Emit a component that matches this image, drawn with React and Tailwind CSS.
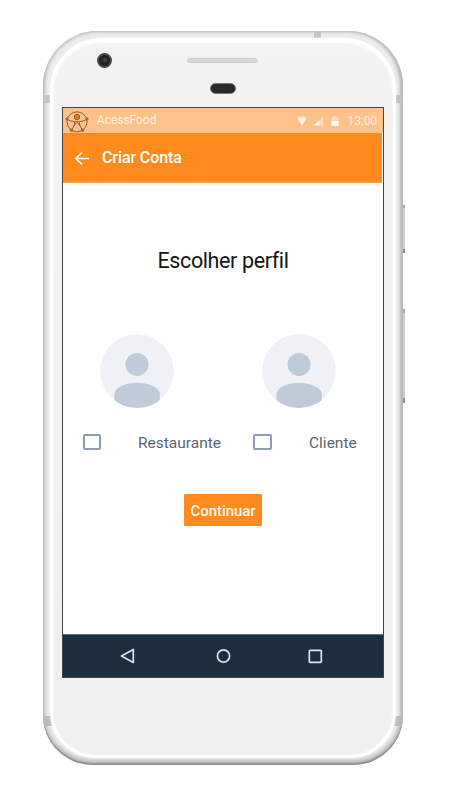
import React from 'react';

function Avatar() {
  return (
    <svg className="size-[74px]" viewBox="0 0 74 74">
      <defs>
        <clipPath id="avatarClip"><circle cx="37" cy="37" r="37" /></clipPath>
      </defs>
      <g clipPath="url(#avatarClip)">
        <circle cx="37" cy="37" r="37" fill="#eff1f7" />
        <circle cx="37" cy="30.4" r="11.5" fill="#bfcbd9" />
        <path d="M14.500 74V60c0-6 10-11.300 22.500-11.300S59.800 54 59.800 60v14z" fill="#bfcbd9" />
      </g>
    </svg>
  );
}

function Logo() {
  return (
    <svg className="mt-[2px] w-[24px] h-[23px]" viewBox="0 0 24 23" fill="none" stroke="#7d5333" strokeWidth=".9">
      <circle cx="12" cy="11.800" r="10" />
      <path d="M1.500 9Q4 11 9.500 11.700h5Q20 11 22.500 9M9.800 12 9.300 15 6.500 20.500M14.200 12 14.700 15 17.500 20.500M8.800 16 12 12.300 15.200 16" />
      <circle cx="12" cy="7" r="2.700" fill="#f57c0c" />
      <g fill="#b96522" stroke="#a75b20" strokeWidth=".5">
        <circle cx="1.900" cy="9" r="1.200" />
        <circle cx="22.100" cy="9" r="1.200" />
        <circle cx="6.500" cy="20.200" r="1.400" />
        <circle cx="17.500" cy="20.200" r="1.400" />
      </g>
    </svg>
  );
}

function StatusBar() {
  return (
    <div className="flex h-[25px] shrink-0 items-center bg-[#ffc28b] pl-[2px] pr-[6px] text-[12px] text-white/75">
      <Logo />
      <span className="ml-[8px] -mt-[2px] text-[12px] leading-[14px] tracking-[-0.05px]">AcessFood</span>
      <svg className="ml-auto w-[46px] h-[14px]" viewBox="0 0 46 14" fill="#fff">
        <path d="M.8 3.200Q6 .5 11.200 3.200L6 11.800z" fillOpacity=".4" />
        <path d="M1.800 4.500Q6 3 10.200 4.500L6 11.500z" fillOpacity=".75" />
        <path d="M18 11.500 27 2.500v9z" fillOpacity=".35" />
        <path d="M18 11.500 23.500 6.500v5z" fillOpacity=".85" />
        <path d="M35.500 3h2V2h3v1h2v9h-7z" fillOpacity=".4" />
        <path d="M35.500 7h7v5h-7z" fillOpacity=".9" />
      </svg>
      <span className="ml-[6px] text-[12px] leading-[14px] tracking-[-0.1px]">13:00</span>
    </div>
  );
}

function ProfileOption({ label, className, boxClass, avatarClass, labelClass }) {
  return (
    <div className={'flex flex-col ' + className}>
      <div className={avatarClass}><Avatar /></div>
      <div className="mt-[24px] flex h-[20px] items-center">
        <span className={'h-[16px] rounded-[2px] border-2 border-[#8d9cb1] bg-white ' + boxClass} />
        <span className={'pt-px text-[15.5px] leading-[20px] text-[#5b6573] ' + labelClass}>{label}</span>
      </div>
    </div>
  );
}

function NavigationBar() {
  return (
    <div className="grid h-[43px] shrink-0 grid-cols-[129px_63px_128px] border-t border-[#637476] bg-[#1f2e3e]">
      <svg className="mx-auto mt-[13px] size-[16px]" viewBox="0 0 16 16" fill="none" stroke="#dfe3e5" strokeWidth="1.700" strokeLinejoin="round">
        <path d="M13.300 1.500v13L1.500 8z" />
      </svg>
      <svg className="mx-auto mt-[13px] size-[16px]" viewBox="0 0 16 16" fill="none" stroke="#dfe3e5" strokeWidth="1.700">
        <circle cx="7.500" cy="8" r="6.100" />
      </svg>
      <svg className="ml-[52px] mt-[13px] size-[16px]" viewBox="0 0 16 16" fill="none" stroke="#dfe3e5" strokeWidth="1.700">
        <rect x="2.300" y="2.300" width="12" height="12" rx=".8" />
      </svg>
    </div>
  );
}

function Screen() {
  return (
    <div className="mx-auto flex h-[571px] w-[322px] flex-col overflow-hidden border border-[#464646] bg-white">
      <StatusBar />
      <div className="mr-px flex h-[50px] shrink-0 items-center border-b border-[#ffa04a] bg-[#ff8b1e] pl-[11px] text-white">
        <svg className="size-[16px]" viewBox="0 0 16 16" fill="none" stroke="#fff" strokeWidth="1.700">
          <path d="M15 8.500H2M8 2.500 2 8.500l6 6" />
        </svg>
        <h1 className="ml-[12px] text-[16px] font-medium leading-[20px] tracking-[-0.1px]">Criar Conta</h1>
      </div>
      <h2 className="mt-[64px] text-center text-[21.500px] leading-[28px] tracking-[-0.38px] text-[#151515]">Escolher perfil</h2>
      <div className="mt-[59px] flex">
        <ProfileOption label="Restaurante" className="w-[170px] pl-[20px]" avatarClass="pl-[17px]" boxClass="w-[18px]" labelClass="ml-[37px] tracking-[0px]" />
        <ProfileOption label="Cliente" className="w-[150px] pl-[20px]" avatarClass="pl-[9px]" boxClass="w-[19px]" labelClass="ml-[37px] tracking-[0px]" />
      </div>
      <button className="ml-[121px] mt-[42px] h-[32px] w-[78px] rounded-[1px] bg-[#ff8b1e] text-[15px] font-medium leading-[34px] tracking-[-0.05px] text-[#fff5ec]">
        Continuar
      </button>
      <div className="flex-1" />
      <NavigationBar />
    </div>
  );
}

function Hardware() {
  return (
    <div className="h-[66px] pt-[11px]">
      <div className="flex h-[16px] items-center">
        <div className="ml-[44px] flex size-[15px] items-center justify-center rounded-full border-2 border-[#454748] bg-[#202426]">
          <div className="size-[4px] rounded-full bg-[#464837]" />
        </div>
        <div className="ml-[75px] h-[5px] w-[71px] rounded-full border border-[#cecece] bg-[#d8d8d8]" />
      </div>
      <div className="ml-[157px] mt-[15px] h-[11px] w-[26px] rounded-full border border-[#777] bg-[#292929]" />
    </div>
  );
}

export default function App() {
  return (
    <main className="h-[793px] w-[450px] overflow-hidden bg-white pl-[43px] pt-[31px] font-['Roboto',sans-serif]">
      <div className="relative h-[734px] w-[360px]">
        <div className="absolute -right-[2px] top-[174px] h-[48px] w-[4px] border-b-4 border-t-[3px] border-b-[#8e8e8e] border-t-[#adadad] bg-[#cfcfcf]" />
        <div className="absolute -right-[2px] top-[278px] h-[94px] w-[4px] border-b-[5px] border-t-4 border-b-[#8e8e8e] border-t-[#adadad] bg-[#cfcfcf]" />
        <div className="relative h-full overflow-hidden rounded-b-[50px] rounded-t-[55px] bg-[#ececec] p-[7px] shadow-[inset_0_-2px_1px_#929292,inset_-3px_0_3px_#bababa,inset_2px_0_3px_#c4c4c4,inset_0_1px_3px_#c8c8c8,inset_0_-5px_4px_#b8b8b8]">
          <div className="absolute left-0 top-[64px] h-[8px] w-[7px] bg-[#c5c5c5]" />
          <div className="absolute right-0 top-[64px] h-[8px] w-[8px] bg-[#c2c2c2]" />
          <div className="absolute right-[82px] top-0 h-[7px] w-[7px] bg-[#c5c5c5]" />
          <div className="absolute left-0 top-[685px] h-[10px] w-[9px] bg-[#bbb]" />
          <div className="absolute right-0 top-[685px] h-[10px] w-[9px] bg-[#bbb]" />
          <div className="relative h-full rounded-b-[46px] rounded-t-[52px] border-[3px] border-white bg-linear-to-b from-[#f3f3f3] to-[#efefef] shadow-[inset_0_0_2px_white,inset_0_2px_2px_white,0_0_2px_#f8f8f8]">
            <Hardware />
            <Screen />
          </div>
        </div>
      </div>
    </main>
  );
}
